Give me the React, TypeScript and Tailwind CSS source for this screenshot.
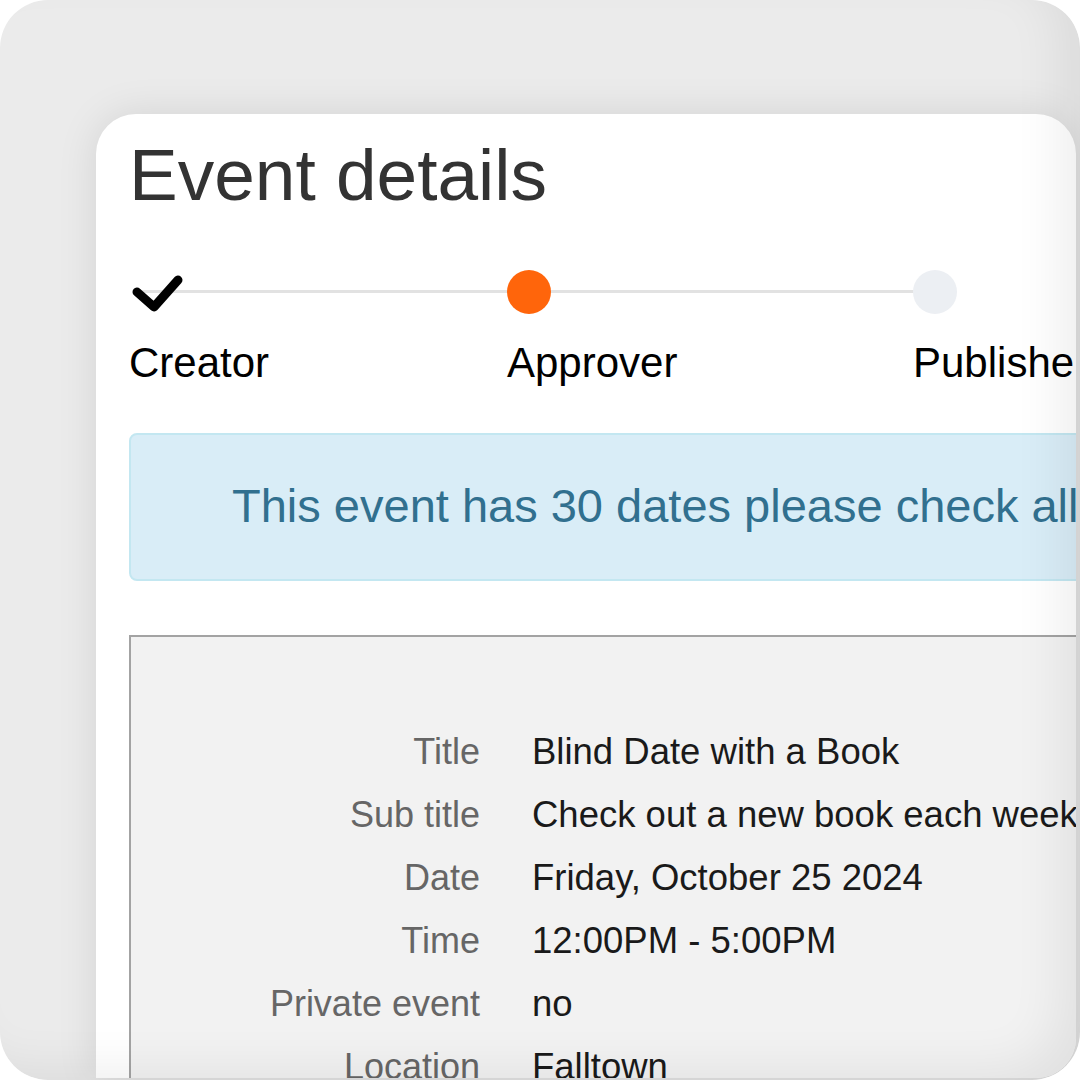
import React from "react";

const font = { fontFamily: '"Liberation Sans", Arial, Helvetica, sans-serif' };

function Check() {
  return (
    <svg width="56" height="44" viewBox="0 0 56 44" className="block">
      <path d="M8 22 L25 37 L49 10" fill="none" stroke="#000" strokeWidth="9" strokeLinecap="round" strokeLinejoin="round" />
    </svg>
  );
}

const rows: [string, string][] = [
  ["Title", "Blind Date with a Book"],
  ["Sub title", "Check out a new book each week"],
  ["Date", "Friday, October 25 2024"],
  ["Time", "12:00PM - 5:00PM"],
  ["Private event", "no"],
  ["Location", "Falltown"],
];

export default function App() {
  return (
    <div className="w-[1080px] h-[1080px] bg-white" style={font}>
      <div className="relative w-[1080px] h-[1080px] rounded-[48px] overflow-hidden bg-[#ebebeb] pl-[96px] pt-[114px] pr-[4px] pb-[2px]">
        <div className="h-full bg-white rounded-tl-[40px] rounded-tr-[40px] rounded-br-[40px] overflow-hidden shadow-[0_0_40px_rgba(0,0,0,0.10)] pl-[33px] pt-[24px]">
          <h1 className="text-[73px] leading-none text-[#333] whitespace-nowrap">Event details</h1>

          <div className="relative mt-[59px] flex w-[1196px]">
            <div className="absolute left-[4px] w-[782px] top-[20px] h-[3px] bg-[#e2e2e2]" />
            <div className="relative w-[378px] flex flex-col">
              <div className="h-[44px]"><Check /></div>
              <div className="mt-[28px] text-[42px] leading-none text-black">Creator</div>
            </div>
            <div className="relative w-[406px] flex flex-col">
              <div className="h-[44px] w-[44px] rounded-full bg-[#ff650b]" />
              <div className="mt-[28px] text-[42px] leading-none text-black">Approver</div>
            </div>
            <div className="relative w-[412px] flex flex-col">
              <div className="h-[44px] w-[44px] rounded-full bg-[#eceff3]" />
              <div className="mt-[28px] text-[42px] leading-none text-black">Publisher</div>
            </div>
          </div>

          <div className="mt-[49px] h-[148px] w-[1000px] flex items-center rounded-[8px] border-2 border-[#c3e7f1] bg-[#d9edf7] pl-[101px] pb-[3px] whitespace-nowrap overflow-hidden">
            <span className="text-[47px] leading-none text-[#31708f]">This event has 30 dates please check all of them</span>
          </div>

          <div className="mt-[54px] w-[1000px] h-[500px] border-2 border-[#a3a3a3] bg-[#f2f2f2] pt-[83px]">
            <div className="grid grid-cols-[349px_1fr] gap-x-[52px] leading-[63px] whitespace-nowrap">
              {rows.map(([k, v]) => (
                <React.Fragment key={k}>
                  <div className="text-right text-[36px] text-[#666]">{k}</div>
                  <div className="text-[36.5px] text-[#1a1a1a]">{v}</div>
                </React.Fragment>
              ))}
            </div>
          </div>
        </div>
        <div className="pointer-events-none absolute inset-0 rounded-[48px] shadow-[inset_-30px_-20px_50px_-10px_rgba(0,0,0,0.07)]" />
      </div>
    </div>
  );
}
